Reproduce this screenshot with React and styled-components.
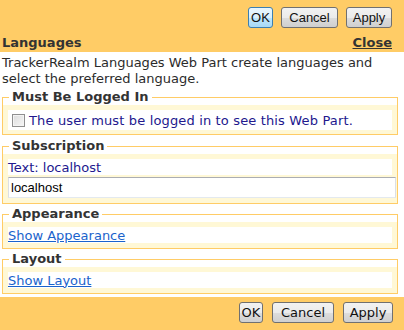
import React from "react";
import styled, { createGlobalStyle, css } from "styled-components";

const GlobalStyle = createGlobalStyle`
  html, body {
    margin: 0;
    padding: 0;
    background: #fff;
  }
  body {
    font-family: "DejaVu Sans", Verdana, sans-serif;
    font-size: 13px;
    color: #333;
  }
`;

const Page = styled.div`
  width: 404px;
  height: 330px;
  display: flex;
  flex-direction: column;
  overflow: hidden;
`;

const TopBar = styled.div`
  background: #ffcc66;
  padding: 7px 7px 0 2px;
`;

const ButtonRow = styled.div`
  display: flex;
  justify-content: flex-end;
  gap: ${(p) => p.$gap || 8}px;
  padding-right: ${(p) => p.$right || 5}px;
`;

const Button = styled.button`
  box-sizing: border-box;
  height: 21px;
  width: ${(p) => p.$w}px;
  padding: 0;
  font-family: ${(p) =>
    p.$verdana ? '"DejaVu Sans", Verdana, sans-serif' : '"Liberation Sans", Arial, sans-serif'};
  font-size: 13px;
  color: #111;
  border: 1px solid #707070;
  border-radius: 3px;
  background: linear-gradient(#f2f2f2 0%, #ebebeb 50%, #dddddd 51%, #cfcfcf 100%);
  line-height: 19px;
  ${(p) =>
    p.$focused &&
    css`
      border-color: #3c7fb1;
      background: linear-gradient(#eaf6fd 0%, #d9f0fc 50%, #bee6fd 51%, #a7d9f5 100%);
    `}
`;

const HeaderRow = styled.div`
  display: flex;
  justify-content: space-between;
  align-items: baseline;
  margin-top: 7px;
  padding-right: 5px;
  line-height: 16px;
  padding-bottom: 1px;
  font-weight: bold;
  font-size: 13px;
  color: #333;
`;

const CloseLink = styled.a`
  color: #333;
  text-decoration: underline;
  cursor: pointer;
`;

const Description = styled.div`
  padding: 3px 2px 0 2px;
  line-height: 16px;
  color: #2b2b2b;
`;

const Sections = styled.div`
  width: 396px;
  margin-left: 2px;
  margin-top: 1px;
`;

const Group = styled.fieldset`
  margin: ${(p) => p.$top || 2}px 0 0 0;
  padding: 0;
  border: 1px solid #ffcc66;
  background: #fff;
  min-width: 0;
`;

const Legend = styled.legend`
  margin-left: 6px;
  padding: 0 3px;
  font-weight: bold;
  font-size: 13px;
  line-height: 16px;
  color: #333;
`;

const GroupBody = styled.div`
  background: #fff8d6;
  padding: 5px 5px ${(p) => p.$bottom || 4}px 5px;
`;

const Row = styled.div`
  background: #fff;
  display: flex;
  align-items: center;
  height: ${(p) => p.$h || 16}px;
  padding-left: ${(p) => p.$indent || 0}px;
  color: #22188e;
  white-space: nowrap;
  letter-spacing: ${(p) => p.$spread || 0}px;
`;

const Check = styled.span`
  box-sizing: border-box;
  width: 13px;
  height: 13px;
  margin-right: 4px;
  border: 1px solid #8f8f8f;
  background: linear-gradient(135deg, #dcdcdc, #f6f6f6);
  box-shadow: inset 0 0 0 1px #f4f4f4;
`;

const TextInput = styled.input`
  box-sizing: border-box;
  display: block;
  width: 388px;
  height: 21px;
  margin-top: 2px;
  padding: 0 2px;
  font-family: "Liberation Sans", Arial, sans-serif;
  font-size: 13px;
  color: #000;
  background: #fff;
  border: 1px solid #dbdfe6;
  border-top-color: #abadb3;
  border-bottom-color: #e3e9ef;
  outline: none;
`;

const Link = styled.a`
  color: #1a63cc;
  text-decoration: underline;
  cursor: pointer;
`;

const BottomBar = styled.div`
  flex: 1;
  background: #ffcc66;
  margin-top: 3px;
  padding-top: 5px;
`;

export default function App() {
  return (
    <Page>
      <GlobalStyle />
      <TopBar>
        <ButtonRow>
          <Button $focused $w={25}>OK</Button>
          <Button $w={57}>Cancel</Button>
          <Button $w={46}>Apply</Button>
        </ButtonRow>
        <HeaderRow>
          <span>Languages</span>
          <CloseLink>Close</CloseLink>
        </HeaderRow>
      </TopBar>
      <Description>
        TrackerRealm Languages Web Part create languages and select the preferred language.
      </Description>
      <Sections>
        <Group $top={1}>
          <Legend>Must Be Logged In</Legend>
          <GroupBody>
            <Row $h={20} $indent={4} $spread={0.15}>
              <Check />
              The user must be logged in to see this Web Part.
            </Row>
          </GroupBody>
        </Group>
        <Group $top={3}>
          <Legend>Subscription</Legend>
          <GroupBody $bottom={5}>
            <Row>Text: localhost</Row>
            <TextInput defaultValue="localhost" />
          </GroupBody>
        </Group>
        <Group>
          <Legend>Appearance</Legend>
          <GroupBody $bottom={5}>
            <Row>
              <Link>Show Appearance</Link>
            </Row>
          </GroupBody>
        </Group>
        <Group>
          <Legend>Layout</Legend>
          <GroupBody $bottom={5}>
            <Row>
              <Link>Show Layout</Link>
            </Row>
          </GroupBody>
        </Group>
      </Sections>
      <BottomBar>
        <ButtonRow $gap={9} $right={11}>
          <Button $verdana $w={24}>OK</Button>
          <Button $verdana $w={62}>Cancel</Button>
          <Button $verdana $w={50}>Apply</Button>
        </ButtonRow>
      </BottomBar>
    </Page>
  );
}
